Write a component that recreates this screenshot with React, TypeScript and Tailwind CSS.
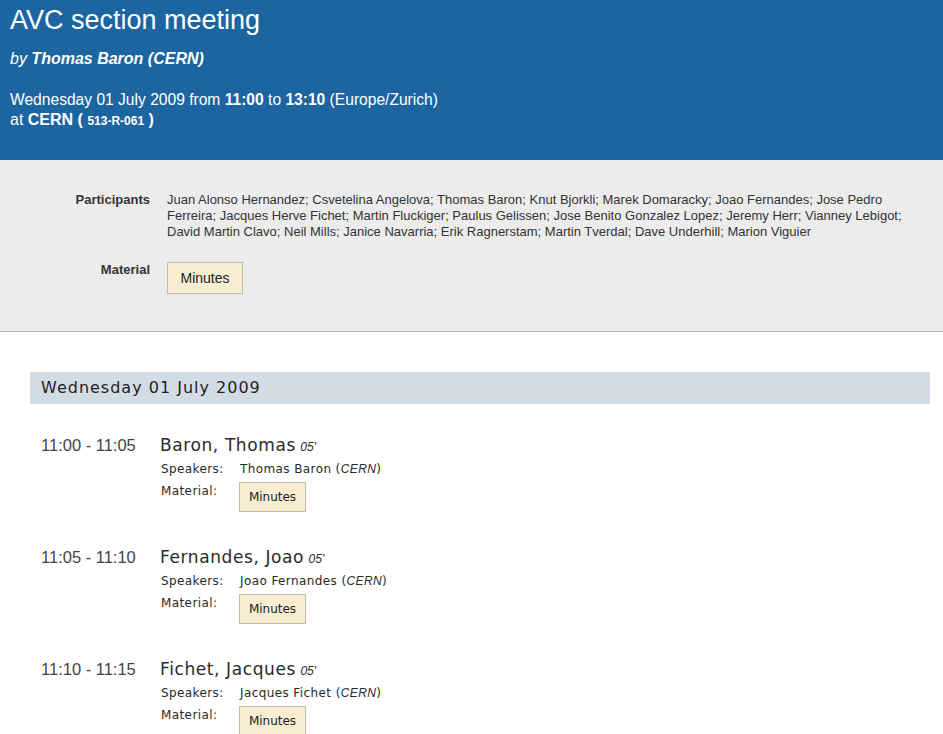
const participants =
  'Juan Alonso Hernandez; Csvetelina Angelova; Thomas Baron; Knut Bjorkli; Marek Domaracky; Joao Fernandes; Jose Pedro Ferreira; Jacques Herve Fichet; Martin Fluckiger; Paulus Gelissen; Jose Benito Gonzalez Lopez; Jeremy Herr; Vianney Lebigot; David Martin Clavo; Neil Mills; Janice Navarria; Erik Ragnerstam; Martin Tverdal; Dave Underhill; Marion Viguier';

const talks = [
  { time: '11:00 - 11:05', title: 'Baron, Thomas', speaker: 'Thomas Baron' },
  { time: '11:05 - 11:10', title: 'Fernandes, Joao', speaker: 'Joao Fernandes' },
  { time: '11:10 - 11:15', title: 'Fichet, Jacques', speaker: 'Jacques Fichet' },
];

function MinutesButton({ small }: { small?: boolean }) {
  return small ? (
    <span className="inline-flex h-[30px] w-[67px] items-center justify-center border border-[#c2bba8] bg-[#f7eed3] text-[12px] text-[#222] font-['DejaVu_Sans',sans-serif]">
      Minutes
    </span>
  ) : (
    <span className="inline-flex h-[32px] w-[76px] items-center justify-center border border-[#c2bba8] bg-[#f7eed3] text-[14px] text-[#222]">
      Minutes
    </span>
  );
}

export default function App() {
  return (
    <div className="min-h-[734px] bg-white font-['Liberation_Sans',Arial,sans-serif]">
      {/* header */}
      <div className="h-[160px] bg-[#1c65a1] px-[10px] pt-[3px] text-white">
        <h1 className="text-[27px] leading-[34px]">AVC section meeting</h1>
        <div className="mt-[12px] text-[16px] leading-[20px]">
          <i>by</i> <b className="italic">Thomas Baron (CERN)</b>
        </div>
        <div className="mt-[21px] text-[15.6px] leading-[20px]">
          Wednesday 01 July 2009 from <b>11:00</b> to <b>13:10</b> (Europe/Zurich)
        </div>
        <div className="text-[16px] leading-[20px]">
          at <b>CERN</b> <b>(</b> <b className="text-[12px]">513-R-061</b> <b>)</b>
        </div>
      </div>

      {/* info */}
      <div className="h-[172px] border-b border-[#b0b0b0] bg-[#ececec] pt-[32px]">
        <div className="grid grid-cols-[150px_1fr] items-start gap-x-[17px] gap-y-[22px] text-[13px] leading-[16px] text-[#333]">
          <div className="text-right font-bold">Participants</div>
          <div className="w-[745px]">{participants}</div>
          <div className="text-right font-bold">Material</div>
          <div>
            <MinutesButton />
          </div>
        </div>
      </div>

      {/* timetable */}
      <div className="px-[30px] pt-[40px] pr-[13px]">
        <div className="flex h-[32px] items-center bg-[#d3dce4] px-[11px] text-[16px] tracking-[1px] text-[#222] font-['DejaVu_Sans',sans-serif]">
          Wednesday 01 July 2009
        </div>
        <div className="pt-[30px]">
          {talks.map((t) => (
            <div key={t.time} className="flex h-[112px]">
              <div className="w-[130px] pl-[11px] text-[16.5px] leading-[22px] text-[#444]">{t.time}</div>
              <div className="text-[#2a2a2a]">
                <div className="leading-[22px]">
                  <span className="text-[17px] tracking-[0.6px] font-['DejaVu_Sans',sans-serif]">{t.title}</span>{' '}
                  <span className="text-[12px] italic">05'</span>
                </div>
                <div className="mt-[3px] flex text-[12px] leading-[16px] tracking-[0.4px] font-['DejaVu_Sans',sans-serif]">
                  <span className="w-[80px] pl-[1px]">Speakers:</span>
                  <span>
                    {t.speaker} (<i className="font-['Liberation_Sans',sans-serif]">CERN</i>)
                  </span>
                </div>
                <div className="mt-[6px] flex text-[12px] leading-[16px] font-['DejaVu_Sans',sans-serif]">
                  <span className="w-[79px] pl-[1px] tracking-[0.4px]">Material:</span>
                  <span className="mt-[-1px]">
                    <MinutesButton small />
                  </span>
                </div>
              </div>
            </div>
          ))}
        </div>
      </div>
    </div>
  );
}
